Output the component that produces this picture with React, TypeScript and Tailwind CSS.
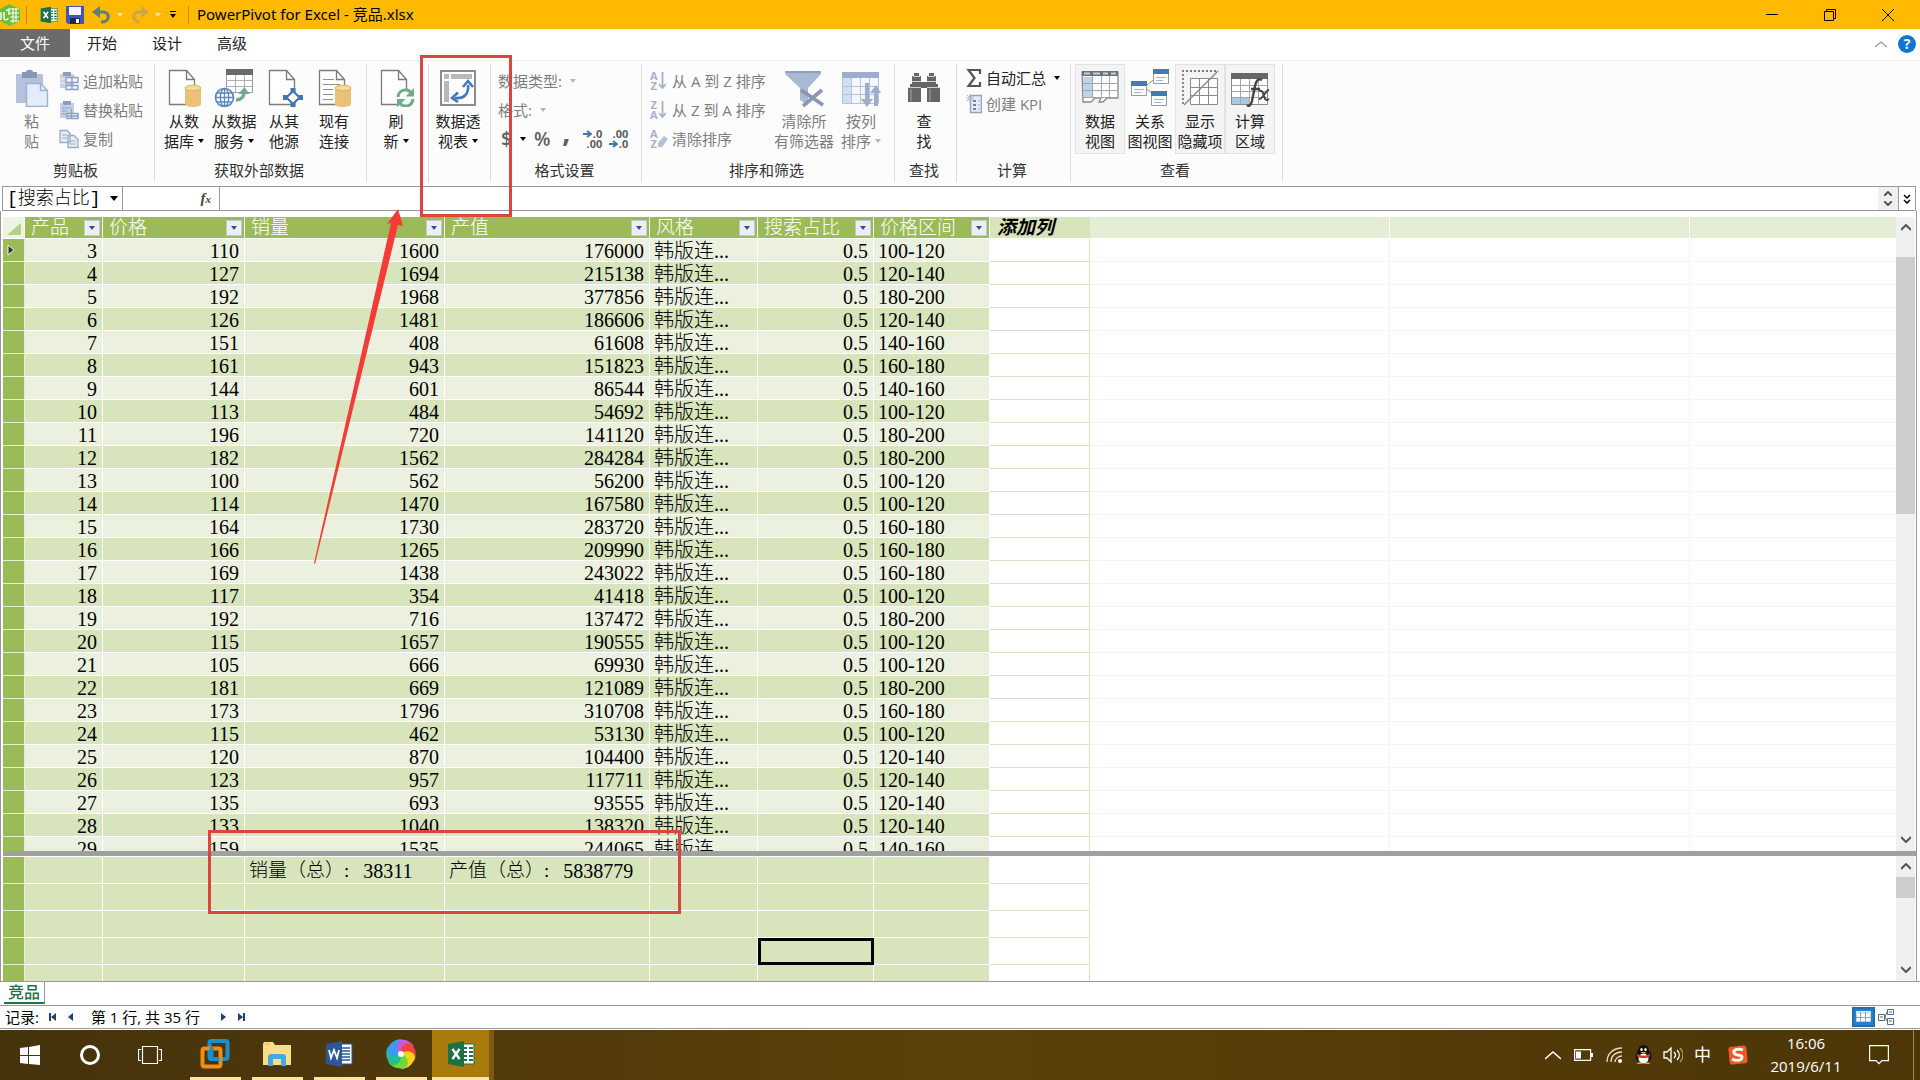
import { JSX, ReactNode } from 'react';
import clsx from 'clsx';

/* ---------- data ---------- */

// [产品, 价格, 销量, 产值, 价格区间]
const products: [number, number, number, number, string][] = [
    [3, 110, 1600, 176000, '100-120'],
    [4, 127, 1694, 215138, '120-140'],
    [5, 192, 1968, 377856, '180-200'],
    [6, 126, 1481, 186606, '120-140'],
    [7, 151, 408, 61608, '140-160'],
    [8, 161, 943, 151823, '160-180'],
    [9, 144, 601, 86544, '140-160'],
    [10, 113, 484, 54692, '100-120'],
    [11, 196, 720, 141120, '180-200'],
    [12, 182, 1562, 284284, '180-200'],
    [13, 100, 562, 56200, '100-120'],
    [14, 114, 1470, 167580, '100-120'],
    [15, 164, 1730, 283720, '160-180'],
    [16, 166, 1265, 209990, '160-180'],
    [17, 169, 1438, 243022, '160-180'],
    [18, 117, 354, 41418, '100-120'],
    [19, 192, 716, 137472, '180-200'],
    [20, 115, 1657, 190555, '100-120'],
    [21, 105, 666, 69930, '100-120'],
    [22, 181, 669, 121089, '180-200'],
    [23, 173, 1796, 310708, '160-180'],
    [24, 115, 462, 53130, '100-120'],
    [25, 120, 870, 104400, '120-140'],
    [26, 123, 957, 117711, '120-140'],
    [27, 135, 693, 93555, '120-140'],
    [28, 133, 1040, 138320, '120-140'],
    [29, 159, 1535, 244065, '140-160'],
];

const headers = ['产品', '价格', '销量', '产值', '风格', '搜索占比', '价格区间'];

const measures: { label: string; value: string }[] = [
    { label: '销量（总）:', value: '38311' },
    { label: '产值（总）:', value: '5838779' },
];

/* ---------- small pieces ---------- */

interface IconProps {
    w: number;
    h: number;
    children: ReactNode;
}

const Icon = ({ w, h, children }: IconProps): JSX.Element => (
    <svg width={w} height={h} viewBox={`0 0 ${w} ${h}`} fill="none" className="shrink-0" aria-hidden="true">
        {children}
    </svg>
);

const Caret = ({ className = 'text-black' }: { className?: string }) => (
    <svg width="6" height="4" viewBox="0 0 6 4" className={clsx('shrink-0', className)} aria-hidden="true">
        <path d="M0 0h6L3 4z" fill="currentColor" />
    </svg>
);

const Separator = () => <div className="w-px h-[18px] bg-[#c08c00]" />;

/* ---------- ribbon icons ---------- */

// Sheet of paper with a folded corner, shared by the import buttons
const PageIcon = ({ children }: { children: ReactNode }) => (
    <Icon w={40} h={38}>
        <g transform="translate(4 0)">
            <path d="M1.500 1.500h17l8 9v25h-25zM18.500 1.500v9h8" fill="#fff" stroke="#7b7b7b" strokeWidth="1.300" />
            {children}
        </g>
    </Icon>
);

const Cylinder = () => (
    <>
        <path d="M17 19v16c0 4 16 4 16 0V19z" fill="#e9c277" />
        <ellipse cx="25" cy="19" rx="8" ry="2.800" fill="#f3d9a2" stroke="#e0b35c" />
    </>
);

const PasteIcon = () => (
    <Icon w={36} h={38}>
        <path d="M2 5h27v29H2z" fill="#b4c2dc" />
        <path d="M8 3h4c0-3 7-3 7 0h4v6H8z" fill="#8797b5" />
        <path d="M12.500 14.500h14l7 7v16h-21z" fill="#e3ecf9" stroke="#9fb1cf" strokeWidth="1.400" />
        <path d="M26.500 14.500v7h7" stroke="#9fb1cf" strokeWidth="1.400" />
    </Icon>
);

const PasteAppendIcon = () => (
    <Icon w={20} h={20}>
        <path d="M1 3h14v14H1z" fill="#c5d0e4" />
        <path d="M4 1h8v4H4z" fill="#8d9dba" />
        <path d="M1 8h5M1 12h5" stroke="#f5f8fd" />
        <path d="M7 6.500h12v5H7zM7 14.500h12v4H7zM13 6.500v12" fill="#eef3fb" stroke="#8fa1c2" strokeWidth="1.400" />
    </Icon>
);

const PasteReplaceIcon = () => (
    <Icon w={20} h={20}>
        <path d="M1 3h14v15H1z" fill="#c5d0e4" />
        <path d="M4 1h8v4H4z" fill="#8d9dba" />
        <path d="M3 8h9M3 11h5M3 14h4" stroke="#8fa1c2" />
        <path d="M8 13.500h11v5H8zM12.500 9v9M8 16h11" fill="#eef3fb" stroke="#8fa1c2" strokeWidth="1.400" />
    </Icon>
);

const CopyIcon = () => (
    <Icon w={20} h={20}>
        <path d="M1 1.500h7l3 3v9H1zM9 6.500h6l4 4v8H9z" fill="#e6edf8" stroke="#9babc8" strokeWidth="1.300" />
        <path d="M3 6h5M3 9h5M11 12h6M11 15h6" stroke="#9babc8" />
    </Icon>
);

const DatabaseIcon = () => (
    <PageIcon>
        <Cylinder />
    </PageIcon>
);

const DataServiceIcon = () => (
    <Icon w={40} h={38}>
        <path d="M12.500 1.500h26v22h-26z" fill="#fff" stroke="#9a9a9a" />
        <path d="M12 0h27v6H12z" fill="#6a6a6a" />
        <path d="M12 11.500h26M12 17.500h26M21.500 6v17M30.500 6v17" stroke="#b0b0b0" />
        <circle cx="10.500" cy="28.500" r="9" fill="#fff" stroke="#5b87bd" strokeWidth="1.600" />
        <ellipse cx="10.500" cy="28.500" rx="4.200" ry="9" stroke="#5b87bd" strokeWidth="1.300" />
        <path d="M10.500 19.500v18M1.500 28.500h18M3 24h15M3 33h15" stroke="#5b87bd" strokeWidth="1.300" />
        <path d="M22 31c5 0 8-3 8-8" stroke="#6fab8b" strokeWidth="3.500" />
        <path d="M24.500 25l6-7 5 7z" fill="#6fab8b" />
    </Icon>
);

const OtherSourceIcon = () => (
    <PageIcon>
        <path d="M25 19v19M15 28.500h20" stroke="#3f78b5" strokeWidth="5" />
        <path d="M25 22l6.500 6.500L25 35l-6.500-6.500z" fill="#fff" stroke="#3f78b5" strokeWidth="2.200" />
    </PageIcon>
);

const ConnectionIcon = () => (
    <PageIcon>
        <path d="M5 10.500h11M5 15.500h17M5 20.500h10M5 25.500h10M5 30.500h10" stroke="#8f8f8f" />
        <Cylinder />
    </PageIcon>
);

const RefreshIcon = () => (
    <PageIcon>
        <circle cx="25.500" cy="29" r="9.500" fill="#fcfcfc" />
        <path d="M18 28c1-8 10-9 13-4M33 30c-1 8-10 9-13 4" stroke="#6fab8b" strokeWidth="3" />
        <path d="M34 19v8.500h-8.500zM17 38.500V30h8.500z" fill="#6fab8b" />
    </PageIcon>
);

const PivotTableIcon = () => (
    <Icon w={36} h={38}>
        <path d="M1 2h34v34H1z" fill="#fff" stroke="#8c8c8c" strokeWidth="2" />
        <path d="M4 5h5v5H4zM11 5h21v5H11zM4 12h5v21H4z" fill="#b9b9b9" />
        <path d="M15 29c9 1 14-4 13-13" stroke="#3f78c0" strokeWidth="2.600" />
        <path d="M23 18l5-6 5 6M18 23.500l-6 5.500 6 4" stroke="#3f78c0" strokeWidth="2.600" />
    </Icon>
);

const SortIcon = ({ top, bottom }: { top: string; bottom: string }) => (
    <span className="flex w-[18px] shrink-0 items-center" aria-hidden="true">
        <span className="flex flex-col text-[11px] font-bold leading-[10px] text-[#a3b1cd]">
            <span>{top}</span>
            <span>{bottom}</span>
        </span>
        <Icon w={8} h={20}>
            <path d="M4.500 1v16M1 13l3.500 4L8 13" stroke="#a3b1cd" strokeWidth="1.800" />
        </Icon>
    </span>
);

const ClearSortIcon = () => (
    <span className="flex w-[18px] shrink-0 items-center" aria-hidden="true">
        <span className="flex flex-col text-[11px] font-bold leading-[10px] text-[#a3b1cd]">
            <span>A</span>
            <span>Z</span>
        </span>
        <Icon w={10} h={20}>
            <path d="M0 14l6-7 4 3-6 8H0z" fill="#b4c0d8" />
        </Icon>
    </span>
);

const ClearFilterIcon = () => (
    <Icon w={40} h={38}>
        <path d="M1 2h36v3L24 19v17l-8-5V19L1 5z" fill="#a9b8d3" />
        <path d="M2 3h34" stroke="#8ea0c2" strokeWidth="2" />
        <path d="M17 21l22 15M38 21L19 37" stroke="#8796b5" strokeWidth="3.600" />
    </Icon>
);

const SortByColumnIcon = () => (
    <Icon w={40} h={38}>
        <path d="M1.500 3.500h36v31h-36z" fill="#f4f8fe" stroke="#b3c3de" />
        <path d="M1 3h37v6H1z" fill="#9dadcb" />
        <path d="M2 9h8v25H2z" fill="#d2dff3" />
        <path d="M1 17.500h36M1 25.500h36M10.500 9v25M19.500 9v25M28.500 9v25" stroke="#b3c3de" />
        <path d="M26 14v18M35 37V21" stroke="#9dadcb" strokeWidth="4" />
        <path d="M20 30h12l-6 8zM29 24h11l-5-8z" fill="#9dadcb" />
    </Icon>
);

const FindIcon = () => (
    <Icon w={36} h={38}>
        <path
            d="M8 4h5v3h2v6h6V7h2V4h5v3h2v8h2v3h2v15H21V19h-6v14H2V18h2v-3h2V7h2z"
            fill="#666"
        />
        <path d="M2 18.500h13M21 18.500h13M6 12.500h9M21 12.500h9M7 7.500h7M22 7.500h7" stroke="#d0d0d0" />
        <path d="M5 20v12M24 20v12" stroke="#909090" strokeWidth="1.500" />
    </Icon>
);

const SigmaIcon = () => (
    <Icon w={16} h={20}>
        <path d="M14 6V2H2.500l6 8-6 8H14v-4" stroke="#555" strokeWidth="2.200" />
    </Icon>
);

const KpiIcon = () => (
    <Icon w={16} h={20}>
        <path d="M4.500 1.500h11v17h-11z" fill="#e6edf8" stroke="#8fa1c2" strokeWidth="1.400" />
        <path d="M7 7h3M7 11h3M7 15h3" stroke="#6e83ad" strokeWidth="2" />
        <path d="M12 7h2M12 11h2M12 15h2" stroke="#9babc8" />
        <path d="M4 0v8M0 4h8M1 1l6 6M7 1L1 7" stroke="#a9b8d3" />
    </Icon>
);

const DataViewIcon = () => (
    <Icon w={38} h={38}>
        <path d="M1 3h36v26H26l-4 4h-4l2-4h-6l-4 4H2z" fill="#fff" stroke="#8a8a8a" strokeWidth="1.300" />
        <path d="M2 8h9v20H2z" fill="#bdd3ea" />
        <path d="M1 2h36v5H1z" fill="#707070" />
        <path d="M3 4.500h6M12 4.500h7M22 4.500h5M30 4.500h5" stroke="#bdd3ea" strokeWidth="2" />
        <path d="M2 14.500h35M2 21.500h35M2 28.500h35M11.500 7v21M20.500 7v21M28.500 7v21" stroke="#a5a5a5" />
    </Icon>
);

const DiagramViewIcon = () => (
    <Icon w={38} h={38}>
        <path d="M16 16l9-7M16 20l7 6" stroke="#8a8a8a" />
        <path d="M22.500 .500h15v14h-15zM.500 12.500h15v14H.500zM20.500 22.500h15v14h-15z" fill="#fff" stroke="#9a9a9a" />
        <path d="M22 0h16v5H22zM0 12h16v5H0zM20 22h16v5H20z" fill="#3e7cb4" />
        <path d="M25 8.500h10M25 11.500h7M3 20.500h10M3 23.500h7M23 30.500h10M23 33.500h7" stroke="#9cb8d4" />
    </Icon>
);

const HiddenIcon = () => (
    <Icon w={38} h={38}>
        <path d="M2 35V2h34" stroke="#7b7b7b" strokeWidth="1.800" strokeDasharray="2 2" />
        <path d="M9.500 9.500h27v26h-27z" fill="#fff" stroke="#8a8a8a" />
        <path d="M9 18.500h27M9 26.500h27M18.500 9v26M27.500 9v26" stroke="#8a8a8a" />
        <path d="M3 36L37 2" stroke="#8a8a8a" strokeWidth="1.500" />
    </Icon>
);

const CalcAreaIcon = () => (
    <Icon w={40} h={38}>
        <path d="M1.500 4.500h36v31h-36z" fill="#fff" stroke="#8a8a8a" />
        <path d="M1 4h37v6H1z" fill="#666" />
        <path d="M2 29h18v6H2z" fill="#a9c8e8" />
        <path d="M1 16.500h36M1 22.500h36M1 28.500h36M10.500 10v25M19.500 10v25M28.500 10v25" stroke="#a5a5a5" />
        <path d="M32 11c-4-2-6 1-7 6l-3 15c-1 4-3 6-5 4M21 20h9" stroke="#444" strokeWidth="2.400" />
        <path d="M29 22c3-1 4 1 5 5s2 5 5 3M39 21c-3 0-7 10-10 9" stroke="#444" strokeWidth="2" />
    </Icon>
);

const DecimalArrow = () => (
    <Icon w={9} h={8}>
        <path d="M0 4h7M4 1l4 3-4 3" stroke="#3f78b5" strokeWidth="2" />
    </Icon>
);

const DecimalIcon = ({ more }: { more: boolean }) => (
    <span className="flex w-5 flex-col text-[11px] font-bold leading-[10px] text-[#606060]" aria-hidden="true">
        <span className="flex items-center justify-end gap-px">
            {more && <DecimalArrow />}
            {more ? '.0' : '.00'}
        </span>
        <span className="flex items-center justify-end gap-px">
            {!more && <DecimalArrow />}
            {more ? '.00' : '.0'}
        </span>
    </span>
);

/* ---------- ribbon ---------- */

interface RibbonGroupProps {
    label?: string;
    width: string;
    children: ReactNode;
}

const RibbonGroup = ({ label, width, children }: RibbonGroupProps) => (
    <section className={clsx('flex shrink-0 flex-col border-r border-[#dcdcdc]', width)}>
        <div className="flex h-[94px] px-1">{children}</div>
        <div className="h-6 pr-[3px] text-center text-[15px] leading-[25px] text-[#333]">{label}</div>
    </section>
);

interface BigButtonProps {
    icon: ReactNode;
    lines: [string, string];
    caret?: boolean;
    disabled?: boolean;
    active?: boolean;
    width?: string;
}

const BigButton = ({ icon, lines, caret, disabled, active, width = 'w-[50px]' }: BigButtonProps) => (
    <button
        type="button"
        className={clsx(
            'flex h-[90px] shrink-0 flex-col items-center border pt-1 text-[15px] leading-5 whitespace-nowrap',
            width,
            disabled ? 'text-[#7d7d7d]' : 'text-[#222]',
            active ? 'border-[#e2e2e2] bg-[#f4f4f4]' : 'border-transparent',
        )}
    >
        {icon}
        <span className="mt-1">{lines[0]}</span>
        <span className="flex items-center gap-1">
            {lines[1]}
            {caret && <Caret className={disabled ? 'text-[#b5b5b5]' : 'text-black'} />}
        </span>
    </button>
);

interface SmallButtonProps {
    icon: ReactNode;
    label: string;
    enabled?: boolean;
    caret?: boolean;
}

const SmallButton = ({ icon, label, enabled, caret }: SmallButtonProps) => (
    <button
        type="button"
        className={clsx(
            'flex items-center gap-1 text-[15px] leading-5 whitespace-nowrap',
            enabled ? 'text-[#222]' : 'text-[#7d7d7d]',
        )}
    >
        {icon}
        {label}
        {caret && <Caret className="ml-1 text-black" />}
    </button>
);

const Ribbon = () => (
    <div className="flex h-[125px] shrink-0 overflow-hidden bg-[#fcfcfc] pt-[3px] pb-1">
        <RibbonGroup label="剪贴板" width="w-[155px]">
            <BigButton icon={<PasteIcon />} lines={['粘', '贴']} disabled width="w-[55px]" />
            <div className="flex flex-col gap-[9px] pt-[7px]">
                <SmallButton icon={<PasteAppendIcon />} label="追加粘贴" />
                <SmallButton icon={<PasteReplaceIcon />} label="替换粘贴" />
                <SmallButton icon={<CopyIcon />} label="复制" />
            </div>
        </RibbonGroup>
        <RibbonGroup label="获取外部数据" width="w-[212px]">
            <BigButton icon={<DatabaseIcon />} lines={['从数', '据库']} caret />
            <BigButton icon={<DataServiceIcon />} lines={['从数据', '服务']} caret />
            <BigButton icon={<OtherSourceIcon />} lines={['从其', '他源']} />
            <BigButton icon={<ConnectionIcon />} lines={['现有', '连接']} />
        </RibbonGroup>
        <RibbonGroup width="w-[62px]">
            <BigButton icon={<RefreshIcon />} lines={['刷', '新']} caret />
        </RibbonGroup>
        <RibbonGroup width="w-[62px]">
            <BigButton icon={<PivotTableIcon />} lines={['数据透', '视表']} caret />
        </RibbonGroup>
        <RibbonGroup label="格式设置" width="w-[151px]">
            <div className="flex flex-col gap-[9px] pt-[7px] pl-[3px] text-[15px] leading-5 text-[#7d7d7d]">
                <button type="button" className="flex items-center gap-2">
                    数据类型: <Caret className="text-[#b5b5b5]" />
                </button>
                <button type="button" className="flex items-center gap-2">
                    格式: <Caret className="text-[#b5b5b5]" />
                </button>
                <div className="flex h-5 items-center pl-[3px] text-[19px] text-[#606060]">
                    <button type="button" className="flex items-center gap-2 font-semibold" aria-label="货币">
                        $ <Caret />
                    </button>
                    <button type="button" className="ml-2 font-semibold">%</button>
                    <button type="button" className="ml-2 w-4 pb-4 text-[28px] font-bold leading-5" aria-label="千位分隔">
                        ,
                    </button>
                    <button type="button" className="ml-2" aria-label="增加小数位数">
                        <DecimalIcon more />
                    </button>
                    <button type="button" className="ml-[6px]" aria-label="减少小数位数">
                        <DecimalIcon more={false} />
                    </button>
                </div>
            </div>
        </RibbonGroup>
        <RibbonGroup label="排序和筛选" width="w-[253px]">
            <div className="flex w-[127px] flex-col gap-[9px] pt-[7px] pl-1">
                <SmallButton icon={<SortIcon top="A" bottom="Z" />} label="从 A 到 Z 排序" />
                <SmallButton icon={<SortIcon top="Z" bottom="A" />} label="从 Z 到 A 排序" />
                <SmallButton icon={<ClearSortIcon />} label="清除排序" />
            </div>
            <BigButton icon={<ClearFilterIcon />} lines={['清除所', '有筛选器']} disabled width="w-[62px]" />
            <BigButton icon={<SortByColumnIcon />} lines={['按列', '排序']} caret disabled width="w-[52px]" />
        </RibbonGroup>
        <RibbonGroup label="查找" width="w-[62px]">
            <BigButton icon={<FindIcon />} lines={['查', '找']} />
        </RibbonGroup>
        <RibbonGroup label="计算" width="w-[114px]">
            <div className="flex flex-col gap-[6px] pt-1 pl-[5px]">
                <SmallButton icon={<SigmaIcon />} label="自动汇总" enabled caret />
                <SmallButton icon={<KpiIcon />} label="创建 KPI" />
            </div>
        </RibbonGroup>
        <RibbonGroup label="查看" width="w-[212px]">
            <BigButton icon={<DataViewIcon />} lines={['数据', '视图']} active />
            <BigButton icon={<DiagramViewIcon />} lines={['关系', '图视图']} />
            <BigButton icon={<HiddenIcon />} lines={['显示', '隐藏项']} active />
            <BigButton icon={<CalcAreaIcon />} lines={['计算', '区域']} active />
        </RibbonGroup>
    </div>
);

/* ---------- title bar and tabs ---------- */

const ExcelBadge = ({ size }: { size: number }) => (
    <svg width={size} height={size} viewBox="0 0 28 28" aria-hidden="true">
        <path d="M15 4h12v20H15z" fill="#fff" stroke="#1e7145" />
        <path d="M17 7h3v2h-3zM22 7h4v2h-4zM17 11h3v2h-3zM22 11h4v2h-4zM17 15h3v2h-3zM22 15h4v2h-4zM17 19h3v2h-3zM22 19h4v2h-4z" fill="#1e7145" />
        <path d="M1 4l16-3v26L1 24z" fill="#1e7145" />
        <path d="M5.500 9l7 10M12.500 9l-7 10" stroke="#fff" strokeWidth="2.400" />
    </svg>
);

const TitleBar = () => (
    <header className="flex h-[29px] shrink-0 items-center bg-[#ffb900] pr-[3px] text-black">
        <Icon w={21} h={22}>
            <path d="M0 5l9-5 11 5v12l-10 5-10-5z" fill="#6cbf3a" />
            <path d="M10 5h9M10 9h9M10 13h9M10 17h9M13 4v15M16 4v14" stroke="#f2fbe9" strokeWidth="1.200" />
            <path d="M1 8v8M4 8v6c0 3 4 2 4 0M6 7l3-2v6" stroke="#fff" strokeWidth="1.400" />
        </Icon>
        <div className="ml-[5px] flex items-center">
            <Separator />
            <button type="button" className="ml-[13px]" aria-label="Excel"><ExcelBadge size={18} /></button>
            <button type="button" className="ml-2" aria-label="保存">
                <Icon w={18} h={18}>
                    <path d="M0 0h18v18H2l-2-2z" fill="#4257b5" />
                    <path d="M3 1h12v8H3z" fill="#f4f6ff" />
                    <path d="M4 12h10v6H4z" fill="#20295e" />
                    <path d="M10 13h3v4h-3z" fill="#fff" />
                </Icon>
            </button>
            <button type="button" className="ml-2 flex items-center gap-[6px]" aria-label="撤消">
                <Icon w={19} h={18}>
                    <path d="M2 6h9c7 0 7 9 0 10H9" stroke="#5f8076" strokeWidth="3.200" />
                    <path d="M8 0v12L0 6z" fill="#5f8076" />
                </Icon>
                <Caret className="text-[#ffe3a0]" />
            </button>
            <button type="button" className="ml-2 flex items-center gap-[6px]" aria-label="恢复">
                <Icon w={18} h={18}>
                    <path d="M16 6H8c-7 0-7 9 0 10h1" stroke="#cda54c" strokeWidth="3.200" />
                    <path d="M10 0v12l8-6z" fill="#cda54c" />
                </Icon>
                <Caret className="text-[#ffe3a0]" />
            </button>
            <button type="button" className="ml-[9px] flex flex-col items-center gap-[2px]" aria-label="自定义快速访问工具栏">
                <span className="h-px w-[6px] bg-black" />
                <Caret />
            </button>
            <div className="ml-3"><Separator /></div>
        </div>
        <h1 className="ml-2 pb-[2px] font-['Noto_Sans','Noto_Sans_CJK_SC',sans-serif] text-[15px] leading-5 whitespace-nowrap">
            PowerPivot for Excel - 竞品.xlsx
        </h1>
        <div className="ml-auto flex">
            <button type="button" className="flex w-[58px] justify-center" aria-label="最小化">
                <Icon w={12} h={12}><path d="M0 5.500h12" stroke="#000" /></Icon>
            </button>
            <button type="button" className="flex w-[58px] justify-center" aria-label="还原">
                <Icon w={12} h={12}><path d="M.500 2.500h9v9h-9zM2.500 2.500v-2h9v9h-2" stroke="#000" /></Icon>
            </button>
            <button type="button" className="flex w-[58px] justify-center" aria-label="关闭">
                <Icon w={12} h={12}><path d="M0 0l12 12M12 0L0 12" stroke="#000" /></Icon>
            </button>
        </div>
    </header>
);

const RibbonTabs = () => (
    <nav className="flex h-8 shrink-0 items-start border-b border-[#f0f0f0] bg-white text-[15px] text-[#222]">
        <button type="button" className="h-7 w-[70px] bg-[#6b6b6b] text-white">文件</button>
        <button type="button" className="h-7 w-16">开始</button>
        <button type="button" className="h-7 w-[66px]">设计</button>
        <button type="button" className="h-7 w-16">高级</button>
        <div className="ml-auto flex h-[30px] items-center gap-[11px] pr-1">
            <Icon w={12} h={7}><path d="M0 6l6-5 6 5" stroke="#999" strokeWidth="1.300" /></Icon>
            <button
                type="button"
                className="h-[18px] w-[18px] rounded-full bg-[#0f76cf] text-[14px] font-bold leading-[18px] text-white"
            >
                ?
            </button>
        </div>
    </nav>
);

const FormulaBar = () => (
    <div className="ml-[2px] mr-1 flex h-[25px] shrink-0 border border-[#999] bg-white">
        <div className="relative flex w-[120px] shrink-0 items-center border-r border-[#999]">
            <select
                aria-label="名称框"
                className="h-full w-full appearance-none bg-white pl-1 font-['Liberation_Mono','Noto_Sans_CJK_SC',monospace] text-[18px] font-light leading-[22px] outline-none"
            >
                <option>[搜索占比]</option>
            </select>
            <div className="pointer-events-none absolute right-1">
                <svg width="8" height="5" viewBox="0 0 8 5" aria-hidden="true"><path d="M0 0h8L4 5z" /></svg>
            </div>
        </div>
        <div className="flex w-[97px] shrink-0 items-center justify-end border-r border-[#999] pr-2">
            <button type="button" className="font-['Liberation_Serif',serif] text-[15px] font-bold italic leading-5 text-[#444]">
                f<span className="text-[11px]">x</span>
            </button>
        </div>
        <input type="text" aria-label="编辑栏" className="min-w-0 flex-1 outline-none" />
        <div className="flex w-5 flex-col items-center justify-between bg-[#f0f0f0] py-1">
            <Icon w={8} h={5}><path d="M0 5l4-4 4 4" stroke="#555" strokeWidth="2" /></Icon>
            <Icon w={8} h={5}><path d="M0 0l4 4 4-4" stroke="#555" strokeWidth="2" /></Icon>
        </div>
        <button type="button" className="flex w-[17px] items-center justify-center border-l border-[#999]" aria-label="展开编辑栏">
            <Icon w={8} h={10}><path d="M1 1l3 3 3-3M1 6l3 3 3-3" stroke="#000" strokeWidth="1.500" /></Icon>
        </button>
    </div>
);

/* ---------- grid ---------- */

const Columns = () => (
    <colgroup>
        <col className="w-[22px]" />
        <col className="w-[78px]" />
        <col className="w-[142px]" />
        <col className="w-[200px]" />
        <col className="w-[205px]" />
        <col className="w-[108px]" />
        <col className="w-[116px]" />
        <col className="w-[116px]" />
        <col className="w-[100px]" />
        <col className="w-[300px]" />
        <col className="w-[300px]" />
        <col />
    </colgroup>
);

interface ScrollBarProps {
    thumb: string;
}

const ScrollBar = ({ thumb }: ScrollBarProps) => (
    <div className="flex w-[19px] shrink-0 flex-col items-center bg-[#f0f0f0]">
        <div className="flex h-5 items-center">
            <Icon w={10} h={7}><path d="M0 6l5-5 5 5" stroke="#555" strokeWidth="2" /></Icon>
        </div>
        <div className="flex w-full flex-1 flex-col">
            <div className={clsx('w-full bg-[#cdcdcd]', thumb)} />
        </div>
        <div className="flex h-[22px] items-center pb-[2px]">
            <Icon w={10} h={7}><path d="M0 1l5 5 5-5" stroke="#555" strokeWidth="2" /></Icon>
        </div>
    </div>
);

const DataGrid = () => (
    <table className="w-full table-fixed border-separate border-spacing-0 text-[20px] leading-5 font-light">
        <Columns />
        <thead>
            <tr className="h-[22px] text-left text-[19px] leading-[21px]">
                <th className="border-r border-b border-white bg-[#eef4e2] p-0" aria-label="全选">
                    <svg width="21" height="21" viewBox="0 0 21 21" className="block" aria-hidden="true">
                        <path d="M18 6v12H4z" fill="#b5d08a" />
                    </svg>
                </th>
                {headers.map((name) => (
                    <th key={name} className="border-r border-b border-white bg-[#9bbb59] p-0 font-light text-white">
                        <div className="flex h-[21px] items-center justify-between pl-[6px] pr-[2px]">
                            {name}
                            <button
                                type="button"
                                aria-label={`筛选 ${name}`}
                                className="flex h-4 w-4 items-center justify-center border border-[#c5c9d6] bg-[#eceef5]"
                            >
                                <Caret className="text-[#3f4a80]" />
                            </button>
                        </div>
                    </th>
                ))}
                <th className="border-b border-white bg-[#d7e4bc] p-0 pl-[7px] font-bold italic">添加列</th>
                <th className="border-r border-b border-white bg-[#e4eed5] p-0" />
                <th className="border-r border-b border-white bg-[#e4eed5] p-0" />
                <th className="border-b border-white bg-[#e4eed5] p-0" />
            </tr>
        </thead>
        <tbody>
            {products.map(([id, price, sales, value, range], i) => {
                const cell = clsx(
                    'border-r border-b border-white p-0 pt-[2px]',
                    i % 2 === 0 ? 'bg-[#ebf1de]' : 'bg-[#d7e4bc]',
                );
                return (
                    <tr key={id} className="h-[23px]">
                        <td className="border-r border-b border-[#e5eed5] bg-[#9bbb59] p-0">
                            {i === 0 && (
                                <svg width="10" height="12" viewBox="0 0 10 12" className="ml-1" aria-hidden="true">
                                    <path d="M1 1l6 5-6 5z" fill="#333" stroke="#f4f8ea" />
                                </svg>
                            )}
                        </td>
                        <td className={clsx(cell, 'pr-[5px] text-right')}>{id}</td>
                        <td className={clsx(cell, 'pr-[5px] text-right')}>{price}</td>
                        <td className={clsx(cell, 'pr-[5px] text-right')}>{sales}</td>
                        <td className={clsx(cell, 'pr-[5px] text-right')}>{value}</td>
                        <td className={clsx(cell, 'pl-1')}>韩版连...</td>
                        <td className={clsx(cell, 'pr-[5px] text-right')}>0.5</td>
                        <td className={clsx(cell, 'pl-1')}>{range}</td>
                        <td className="border-r border-b border-[#dbe3c6] p-0" />
                        <td className="border-r border-b border-[#f5f5f5] p-0" />
                        <td className="border-r border-b border-[#f5f5f5] p-0" />
                        <td className="border-b border-[#f5f5f5] p-0" />
                    </tr>
                );
            })}
        </tbody>
    </table>
);

const CalculationArea = () => (
    <table className="w-full table-fixed border-separate border-spacing-0 text-[19px] leading-6 font-light">
        <Columns />
        <tbody>
            {[0, 1, 2, 3, 4].map((row) => (
                <tr key={row} className="h-[27px]">
                    <td className="border-r border-b border-[#e5eed5] bg-[#9bbb59] p-0" />
                    {headers.map((name, col) => {
                        const measure = row === 0 ? measures[col - 2] : undefined;
                        const selected = row === 3 && col === 5;
                        return (
                            <td
                                key={name}
                                className={clsx(
                                    'bg-[#d7e4bc] p-0',
                                    selected ? 'border-[3px] border-black' : 'border-r border-b border-white',
                                )}
                            >
                                {measure && (
                                    <div className="flex gap-[14px] pt-[2px] pl-1 whitespace-nowrap">
                                        <span>{measure.label}</span>
                                        <span className="text-[20px]">{measure.value}</span>
                                    </div>
                                )}
                            </td>
                        );
                    })}
                    <td className="border-r border-b border-[#dbe3c6] p-0" />
                    <td className="p-0" colSpan={3} />
                </tr>
            ))}
        </tbody>
    </table>
);

/* ---------- bottom bars ---------- */

const RecordButton = ({ label, d }: { label: string; d: string }) => (
    <button type="button" aria-label={label} className="flex w-[18px] justify-center">
        <Icon w={8} h={8}><path d={d} fill="#1f3f77" /></Icon>
    </button>
);

const StatusBar = () => (
    <footer className="flex h-6 shrink-0 items-center border-y border-[#999] bg-white pl-[5px] text-[15px] leading-5 text-black">
        <span>记录:</span>
        <div className="ml-[5px] flex">
            <RecordButton label="首条" d="M0 0h2v8H0zM7 0v8L2 4z" />
            <RecordButton label="上一条" d="M6 0v8L1 4z" />
        </div>
        <span className="ml-[11px]">第 1 行, 共 35 行</span>
        <div className="ml-[14px] flex">
            <RecordButton label="下一条" d="M2 0v8l5-4z" />
            <RecordButton label="末条" d="M1 0v8l5-4zM6 0h2v8H6z" />
        </div>
        <div className="ml-auto flex items-center gap-[3px] pr-[26px]">
            <button type="button" aria-label="数据视图" className="border-2 border-[#1f6fb5] bg-[#2b7fc9] p-px">
                <Icon w={17} h={14}>
                    <path d="M1.500 1.500h14v10h-14z" fill="#fff" stroke="#b9cfe4" />
                    <path d="M1 1h15v3H1z" fill="#d3e2f0" />
                    <path d="M1 7.500h14M5.500 2v10M10.500 2v10" stroke="#8aa5bf" />
                </Icon>
            </button>
            <button type="button" aria-label="关系图视图">
                <Icon w={16} h={16}>
                    <path d="M.500 5.500h6v6h-6zM9.500 .500h6v5h-6zM9.500 9.500h6v6h-6z" fill="#fff" stroke="#4d6a88" />
                    <path d="M7 8l2-5M7 8l2 4M2 8h3M11 3h3M11 12h3" stroke="#4d6a88" />
                </Icon>
            </button>
        </div>
    </footer>
);

interface TaskItemProps {
    label: string;
    active?: boolean;
    children: ReactNode;
}

const TaskItem = ({ label, active, children }: TaskItemProps) => (
    <button
        type="button"
        aria-label={label}
        className={clsx(
            'flex w-[62px] flex-col items-center',
            active && 'border-r-[5px] border-[#7c5a12] bg-[#a97a0c]',
        )}
    >
        <span className="flex flex-1 items-center">{children}</span>
        <span className={clsx('h-[3px] bg-[#fde3a3]', active ? 'w-full' : 'w-[51px]')} />
    </button>
);

const Taskbar = () => (
    <div className="flex h-[50px] shrink-0 bg-linear-to-r from-[#45330c] via-[#5c400a] to-[#4c3607] text-white">
        <button type="button" className="flex w-[60px] items-center justify-center" aria-label="开始">
            <Icon w={20} h={20}>
                <path d="M0 3l8-1v8H0zM9 2l11-2v10H9zM0 11h8v8l-8-1zM9 11h11v9L9 19z" fill="#fff" />
            </Icon>
        </button>
        <button type="button" className="flex w-[60px] items-center justify-center" aria-label="Cortana">
            <span className="h-5 w-5 rounded-full border-[3px] border-white" />
        </button>
        <button type="button" className="flex w-[60px] items-center justify-center" aria-label="任务视图">
            <Icon w={24} h={20}>
                <path d="M4.500 1.500h15v17h-15zM3 4.500H.500v11H3M21 4.500h2.500v11H21" stroke="#fff" strokeWidth="1.200" />
            </Icon>
        </button>
        <div className="ml-1 flex">
            <TaskItem label="VMware">
                <Icon w={30} h={30}>
                    <rect x="9.500" y="2" width="18" height="18" rx="2" stroke="#1a8fd0" strokeWidth="4" />
                    <rect x="2.500" y="9.500" width="18" height="18" rx="2" stroke="#f28b17" strokeWidth="4" />
                    <path d="M11.500 8v12h8" stroke="#1a8fd0" strokeWidth="4" />
                </Icon>
            </TaskItem>
            <TaskItem label="文件资源管理器">
                <Icon w={28} h={24}>
                    <path d="M0 2l1-2h9l2 3h16v20H0z" fill="#f9dd8b" />
                    <path d="M2 1h5v2H2z" fill="#f2c94c" />
                    <path d="M5 24V14l2-2h14l2 2v10h-5v-7h-8v7z" fill="#45a9e0" />
                </Icon>
            </TaskItem>
            <TaskItem label="Word">
                <Icon w={28} h={28}>
                    <path d="M15 4h12v20H15z" fill="#fff" stroke="#2b579a" />
                    <path d="M17 8h8M17 11h8M17 14h8M17 17h8M17 20h8" stroke="#2b579a" strokeWidth="1.500" />
                    <path d="M1 4l16-3v26L1 24z" fill="#2b579a" />
                    <path d="M4 10l2 8 3-8 3 8 2-8" stroke="#fff" strokeWidth="1.800" />
                </Icon>
            </TaskItem>
            <TaskItem label="浏览器">
                {/* six-petal swirl */}
                <Icon w={30} h={30}>
                    <circle cx="15" cy="15" r="13" fill="#f0f0f0" />
                    <path id="petal" d="M15 15C8 13 6 5 11 1c8-2 15 2 17 7-6-3-12-1-13 7z" fill="#c15be8" />
                    <path d="M15 15C8 13 6 5 11 1c8-2 15 2 17 7-6-3-12-1-13 7z" fill="#f0453f" transform="rotate(60 15 15)" />
                    <path d="M15 15C8 13 6 5 11 1c8-2 15 2 17 7-6-3-12-1-13 7z" fill="#f7d21b" transform="rotate(120 15 15)" />
                    <path d="M15 15C8 13 6 5 11 1c8-2 15 2 17 7-6-3-12-1-13 7z" fill="#6fd83a" transform="rotate(180 15 15)" />
                    <path d="M15 15C8 13 6 5 11 1c8-2 15 2 17 7-6-3-12-1-13 7z" fill="#23c08e" transform="rotate(240 15 15)" />
                    <path d="M15 15C8 13 6 5 11 1c8-2 15 2 17 7-6-3-12-1-13 7z" fill="#3a9bf0" transform="rotate(300 15 15)" />
                    <circle cx="15" cy="15" r="3" fill="#fff" />
                </Icon>
            </TaskItem>
            <TaskItem label="Excel" active>
                <ExcelBadge size={28} />
            </TaskItem>
        </div>
        <div className="ml-auto flex items-center">
            <Icon w={16} h={9}><path d="M0 8l8-7 8 7" stroke="#fff" strokeWidth="1.500" /></Icon>
            <div className="ml-[13px]">
                <Icon w={19} h={12}>
                    <path d="M.600 .600h16v10.800h-16z" stroke="#fff" strokeWidth="1.200" />
                    <path d="M2 2.500h5v7H2zM17 4h2v4h-2z" fill="#fff" />
                </Icon>
            </div>
            <div className="ml-[13px]">
                <Icon w={17} h={16}>
                    <path d="M1 15C1 7 7 1 16 1M5 15C5 9 9 5 16 5M9 15c0-3 3-6 7-6" stroke="#e6dcc4" strokeWidth="1.300" />
                    <circle cx="14" cy="14" r="2" fill="#fff" />
                </Icon>
            </div>
            <div className="ml-3">
                <Icon w={17} h={20}>
                    <ellipse cx="8.500" cy="11" rx="8" ry="7" fill="#111" />
                    <ellipse cx="8.500" cy="6" rx="5.500" ry="6" fill="#111" />
                    <ellipse cx="8.500" cy="13.500" rx="5" ry="5" fill="#fff" />
                    <path d="M2 8.500c4 3 9 3 13 0v3c-4 2-9 2-13 0z" fill="#e0302c" />
                    <ellipse cx="6.500" cy="4.500" rx="1.200" ry="1.600" fill="#fff" />
                    <ellipse cx="10.500" cy="4.500" rx="1.200" ry="1.600" fill="#fff" />
                    <path d="M5 7h7l-3.500 1.500zM2 19c0-2 5-2 5 0zM10 19c0-2 5-2 5 0z" fill="#f5a81c" />
                </Icon>
            </div>
            <div className="ml-[11px]">
                <Icon w={20} h={18}>
                    <path d="M1 6h3l4-4v14l-4-4H1z" stroke="#fff" strokeWidth="1.300" />
                    <path d="M11 6c2 2 2 4 0 6M14 4c3 3 3 7 0 10" stroke="#fff" strokeWidth="1.300" />
                    <path d="M17 2c4 4 4 10 0 14" stroke="#a8976b" strokeWidth="1.300" />
                </Icon>
            </div>
            <span className="ml-[11px] text-[17px] leading-5">中</span>
            <div className="ml-[17px]">
                <Icon w={20} h={20}>
                    <rect x="1" y="1" width="18" height="18" rx="3" fill="#ee5a24" transform="rotate(-6 10 10)" />
                    <path d="M15 5C9 3 5 5 6 8s9 1 8 5c-1 3-6 3-10 1" stroke="#fff" strokeWidth="2.800" />
                </Icon>
            </div>
            <div className="ml-5 mr-px flex w-[76px] flex-col text-center text-[15px] leading-[23px]">
                <span>16:06</span>
                <span>2019/6/11</span>
            </div>
            <button type="button" className="ml-6" aria-label="操作中心">
                <Icon w={20} h={20}>
                    <path d="M.600 .600h18.800v15H13l-3 3-3-3H.600z" stroke="#fff" strokeWidth="1.200" />
                </Icon>
            </button>
            <div className="ml-6 mr-[6px] h-[50px] w-px bg-[#9c8a5c]" />
        </div>
    </div>
);

/* ---------- annotations drawn over the window ---------- */

const Annotations = () => (
    <div className="pointer-events-none absolute top-0 left-0" aria-hidden="true">
        <div className="absolute top-[55px] left-[420px] h-[162px] w-[92px] border-[3px] border-[#dc443e]" />
        <div className="absolute top-[830px] left-[208px] h-[84px] w-[473px] border-[3px] border-[#dc443e]" />
        <svg width="700" height="600" viewBox="0 0 700 600" className="absolute top-0 left-0 max-w-none">
            <path d="M398 209l5 17-5-1L315 564l-1-1 77-340-4 1z" fill="#f43b38" />
        </svg>
    </div>
);

const App = (): JSX.Element => (
    <div className="relative flex h-screen flex-col overflow-hidden bg-white font-['Open_Sans','Noto_Sans_CJK_SC',sans-serif]">
        <TitleBar />
        <RibbonTabs />
        <Ribbon />
        <FormulaBar />

        <main className="mr-[3px] flex min-h-0 flex-1 flex-col border-x border-[#999] pl-[2px] pt-[6px] font-['Liberation_Serif','Noto_Sans_CJK_SC',serif] text-black">
            <div className="flex min-h-0 flex-1 pr-px">
                <div className="min-w-0 flex-1 overflow-hidden">
                    <DataGrid />
                </div>
                <ScrollBar thumb="mt-5 h-[257px]" />
            </div>
            <div className="h-[5px] shrink-0 bg-[#a0a0a0]" />
            <div className="flex h-[125px] shrink-0 pr-px">
                <div className="min-w-0 flex-1 overflow-hidden pt-px">
                    <CalculationArea />
                </div>
                <ScrollBar thumb="mt-px h-[21px]" />
            </div>
        </main>

        <div className="flex h-6 shrink-0 border-t border-[#999] bg-white pl-1">
            <button
                type="button"
                className="h-[22px] border-r border-b-2 border-[#999] border-b-[#217346] px-1 text-[16px] font-medium leading-5 text-[#217346]"
            >
                竞品
            </button>
        </div>
        <StatusBar />
        <div className="h-px shrink-0 bg-white" />
        <Taskbar />
        <Annotations />
    </div>
);

export default App;
